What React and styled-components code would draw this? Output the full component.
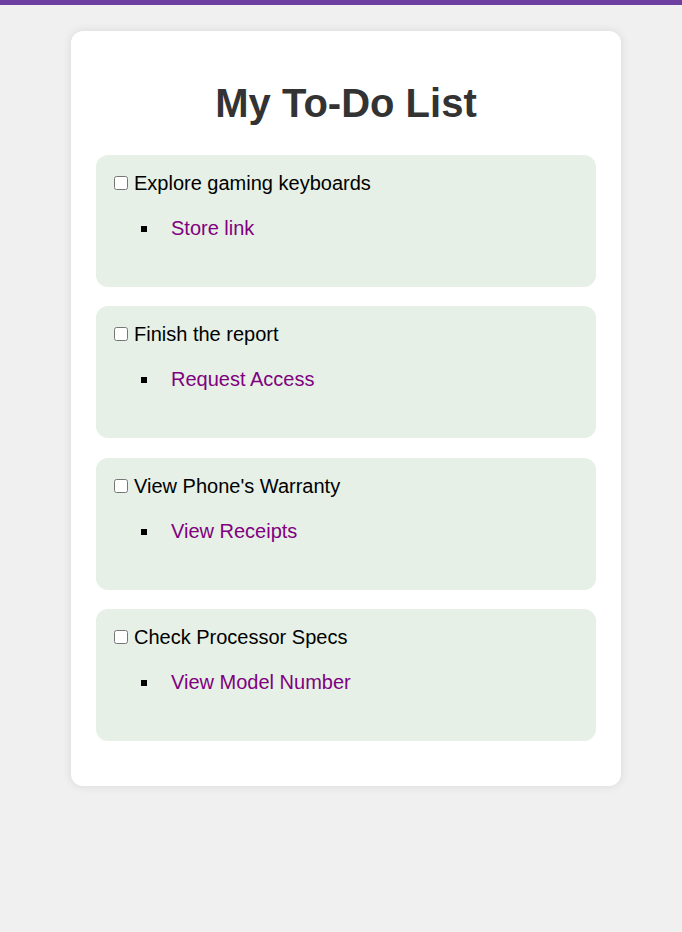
import styled, { createGlobalStyle } from 'styled-components';

const GlobalStyle = createGlobalStyle`
  body {
    margin: 0;
    background: #f0f0f0;
    border-top: 5px solid #6c3fa1;
    font-family: 'Liberation Sans', Arial, sans-serif;
  }
`;

const Page = styled.div`
  padding: 26px 0 40px 10px;
`;

const Card = styled.div`
  width: 500px;
  margin: 0 auto;
  padding: 30px 25px 26px;
  background: #fff;
  border-radius: 12px;
  box-shadow: 0 0 10px rgba(0, 0, 0, 0.1);
`;

const Title = styled.h1`
  margin: 20px 0 29px;
  font-size: 40px;
  font-weight: bold;
  color: #333;
  text-align: center;
`;

const Item = styled.div`
  background: #e6f0e6;
  border-radius: 12px;
  padding: 17px 15px 16px 14px;
  margin-bottom: 19.3px;
  font-size: 20px;
  color: #000;
`;

const Check = styled.input`
  width: 14px;
  height: 14px;
  margin: 3px 6px 3px 4px;
`;

const Links = styled.ul`
  margin: 19px 0 28px;
  padding-left: 50px;
  list-style: square;
`;

const LinkItem = styled.li`
  padding: 3px 0 3px 11px;
`;

const Link = styled.a`
  color: purple;
  text-decoration: none;
`;

const todos = [
  { text: 'Explore gaming keyboards', link: 'Store link' },
  { text: 'Finish the report', link: 'Request Access' },
  { text: "View Phone's Warranty", link: 'View Receipts' },
  { text: 'Check Processor Specs', link: 'View Model Number' },
];

export default function App() {
  return (
    <>
      <GlobalStyle />
      <Page>
        <Card>
          <Title>My To-Do List</Title>
          {todos.map((todo) => (
            <Item key={todo.text}>
              <label>
                <Check type="checkbox" />
                {todo.text}
              </label>
              <Links>
                <LinkItem>
                  <Link href="#">{todo.link}</Link>
                </LinkItem>
              </Links>
            </Item>
          ))}
        </Card>
      </Page>
    </>
  );
}
